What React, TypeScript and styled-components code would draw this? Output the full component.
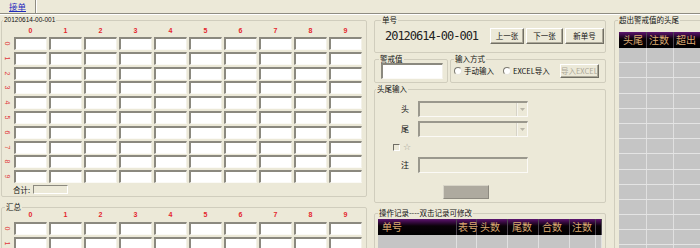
import styled, { createGlobalStyle } from "styled-components";

const CJK = `"Noto Sans CJK SC", "Liberation Sans", sans-serif`;

const GlobalStyle = createGlobalStyle`
  * { box-sizing: border-box; }
  body {
    margin: 0;
    background: #ece9d8;
    font-family: "Liberation Sans", "Noto Sans CJK SC", sans-serif;
  }
`;

const Page = styled.div`
  width: 700px;
  height: 248px;
  overflow: hidden;
  background: #ece9d8;
  display: flex;
  flex-direction: column;
`;

const TabStrip = styled.div`
  flex: none;
  height: 14px;
  display: flex;
  border-bottom: 1px solid #8f8d82;
  box-shadow: 0 1px 0 #fff;
`;

const Tab = styled.div`
  width: 36px;
  border-right: 1px solid #8f8d82;
  box-shadow: 1px 0 0 #fff;
  display: flex;
  align-items: center;
  justify-content: center;
  font: 8.5px/13px ${CJK};
  color: #1f2bbd;
  text-decoration: underline;
`;

const Main = styled.div`
  flex: 1;
  min-height: 0;
  display: flex;
  align-items: flex-start;
`;

const LeftCol = styled.div`
  flex: none;
  width: 366px;
  margin-left: 1px;
  display: flex;
  flex-direction: column;
`;

const MidCol = styled.div`
  flex: none;
  width: 232px;
  margin-left: 7px;
  display: flex;
  flex-direction: column;
`;

const RightCol = styled.div`
  flex: none;
  width: 100px;
  margin-left: 8px;
`;

const Group = styled.fieldset<{ $top?: number; $grow?: boolean }>`
  margin: ${(p) => p.$top ?? 0}px 0 0 0;
  padding: 0;
  min-width: 0;
  border: 1px solid #d0cdbd;
  border-radius: 2px;
  flex: ${(p) => (p.$grow ? 1 : "none")};
`;

const Legend = styled.legend<{ $indent: number; $latin?: boolean }>`
  margin-left: ${(p) => p.$indent}px;
  padding: 0 1px;
  height: 12px;
  font: ${(p) => (p.$latin ? `6.5px/11px "Liberation Sans", sans-serif` : `7.5px/11px ${CJK}`)};
  color: #111;
`;

/* ---------- number grids ---------- */

const HeadRow = styled.div<{ $top: number; $bottom: number }>`
  display: grid;
  grid-template-columns: 10px repeat(10, 33px);
  column-gap: 2px;
  height: 8px;
  margin: ${(p) => p.$top}px 0 ${(p) => p.$bottom}px 0;
`;

const HeadNum = styled.span`
  text-align: center;
  font: bold 7px/8px "Liberation Sans", sans-serif;
  color: #e4262c;
`;

const CellGrid = styled.div`
  display: grid;
  grid-template-columns: 10px repeat(10, 33px);
  column-gap: 2px;
  grid-auto-rows: 13px;
  row-gap: 1.8px;
`;

const RowLabel = styled.span`
  display: flex;
  align-items: center;
  justify-content: center;
  font: 7px/1 "Liberation Sans", sans-serif;
  color: #e0383c;
  transform: rotate(90deg);
`;

const Cell = styled.div`
  background: #fff;
  border-style: solid;
  border-width: 2px 1px 1px 2px;
  border-color: #8b897f #f3f1e8 #fbfaf6 #8b897f;
`;

const TotalRow = styled.div`
  display: flex;
  align-items: center;
  height: 9px;
  margin: 2px 0 2px 11px;
`;

const TotalLabel = styled.span`
  width: 20px;
  font: 7.5px/9px ${CJK};
  color: #111;
`;

const TotalBox = styled.div`
  width: 35px;
  height: 9px;
  border: 1px solid;
  border-color: #8b897f #fff #fff #8b897f;
`;

const digits = Array.from({ length: 10 }, (_, i) => i);

const NumberGrid = ({
  headTop,
  headBottom,
  rows,
}: {
  headTop: number;
  headBottom: number;
  rows: number;
}) => (
  <>
    <HeadRow $top={headTop} $bottom={headBottom}>
      <span />
      {digits.map((d) => (
        <HeadNum key={d}>{d}</HeadNum>
      ))}
    </HeadRow>
    <CellGrid>
      {digits.slice(0, rows).map((r) => [
        <RowLabel key={`l${r}`}>{r}</RowLabel>,
        ...digits.map((c) => <Cell key={`${r}-${c}`} />),
      ])}
    </CellGrid>
  </>
);

/* ---------- middle panel ---------- */

const SheetRow = styled.div`
  display: flex;
  align-items: center;
  height: 16px;
  margin: 2px 1px 8px 10px;
`;

const BigNo = styled.span`
  flex: 1;
  font: 12px/16px "DejaVu Sans Mono", monospace;
  letter-spacing: -1.02px;
  color: #222;
`;

const ButtonRow = styled.div`
  display: flex;
  gap: 2px;
`;

const Button = styled.button<{ $w: number; $h?: number; $off?: boolean }>`
  width: ${(p) => p.$w}px;
  height: ${(p) => p.$h ?? 16}px;
  padding: 0;
  background: #ece9d8;
  border: 1px solid;
  border-color: #fff #716f64 #716f64 #fff;
  box-shadow: inset -1px -1px 0 #aca899;
  font: 7.5px/1 ${CJK};
  color: ${(p) => (p.$off ? "#aca899" : "#111")};
  white-space: nowrap;
`;

const Row = styled.div`
  display: flex;
  gap: 2px;
`;

const AlertBody = styled.div`
  margin-top: -2px;
  padding: 0 0 3px 6px;
`;

const WhiteInput = styled.div<{ $w: number }>`
  width: ${(p) => p.$w}px;
  height: 16px;
  background: #fff;
  border-style: solid;
  border-width: 2px 1px 1px 2px;
  border-color: #8b897f #f3f1e8 #fbfaf6 #8b897f;
`;

const ModeBody = styled.div`
  display: flex;
  align-items: center;
  height: 16px;
  margin: -2px 0 3px 3px;
`;

const Option = styled.label<{ $gap: number }>`
  display: flex;
  align-items: center;
  gap: 2px;
  margin-right: ${(p) => p.$gap}px;
  font: 7.5px/1 ${CJK};
  color: #111;
  white-space: nowrap;
`;

const Radio = styled.span`
  width: 8px;
  height: 8px;
  border-radius: 50%;
  background: #fff;
  border: 1px solid;
  border-color: #7c7a70 #e8e6dc #e8e6dc #7c7a70;
`;

const FormGrid = styled.div`
  display: grid;
  grid-template-columns: 20px 110px;
  grid-template-rows: 16px 16px 12px 16px;
  column-gap: 3px;
  row-gap: 4px;
  margin: 6px 0 0 20px;
`;

const FieldLabel = styled.span`
  align-self: center;
  text-align: center;
  font: 8px/1 ${CJK};
  color: #111;
`;

const SunkenField = styled.div`
  display: flex;
  justify-content: flex-end;
  background: #ece9d8;
  border-style: solid;
  border-width: 2px 1px 1px 2px;
  border-color: #9a988d #fbfaf6 #fbfaf6 #9a988d;
`;

const ArrowBox = styled.span`
  width: 10px;
  display: flex;
  align-items: center;
  justify-content: center;
  border-left: 1px solid #f6f5ee;
  box-shadow: -1px 0 0 #d6d3c6;
`;

const CheckRow = styled.div`
  grid-column: 1 / span 2;
  display: flex;
  align-items: center;
  gap: 3px;
  margin-left: -2px;
`;

const CheckBox = styled.span`
  width: 7px;
  height: 7px;
  border: 1px solid;
  border-color: #6f6d64 #fff #fff #6f6d64;
`;

const Star = styled.span`
  font: 9px/1 "DejaVu Sans", sans-serif;
  color: #a19e90;
`;

const FlatButton = styled.div`
  width: 46px;
  height: 14px;
  margin: 12px 0 3px 68px;
  background: #aeaa9f;
  border: 1px solid;
  border-color: #d8d5c8 #8d8a80 #8d8a80 #d8d5c8;
`;

/* ---------- dark grids ---------- */

const HEAD_BG = "linear-gradient(to bottom, #5e1670 0px, #3a0a44 3px, #0a0208 7px, #000 100%)";

const DarkTable = styled.div<{ $cols: string; $w?: number; $ml: number; $mt: number }>`
  margin: ${(p) => p.$mt}px 0 0 ${(p) => p.$ml}px;
  width: ${(p) => (p.$w ? `${p.$w}px` : "auto")};
  & > div {
    display: grid;
    grid-template-columns: ${(p) => p.$cols};
  }
`;

const DarkHead = styled.div`
  height: 16px;
  background: ${HEAD_BG};
`;

const HeadCell = styled.span<{ $pad: number }>`
  padding-left: ${(p) => p.$pad}px;
  font: 10px/16px ${CJK};
  color: #dcaa72;
  white-space: nowrap;
  border-right: 1px solid #4d4650;
`;

const BodyRow = styled.div<{ $h: number }>`
  height: ${(p) => p.$h}px;
  background: #c5c5c5;
  border-bottom: 1px solid #e4e4e4;
`;

const BodyCell = styled.span`
  border-right: 1px solid #e0e0e0;
`;

const logCols = [
  { t: "单号", p: 4 },
  { t: "表号", p: 1 },
  { t: "头数", p: 3 },
  { t: "尾数", p: 4 },
  { t: "合数", p: 3 },
  { t: "注数", p: 2 },
  { t: "", p: 0 },
];

const overCols = [
  { t: "头尾", p: 4 },
  { t: "注数", p: 2 },
  { t: "超出", p: 2 },
];

const Arrow = () => (
  <svg width="5" height="3" viewBox="0 0 5 3">
    <path d="M0 0h5L2.5 3z" fill="#b9b6a8" />
  </svg>
);

export default function App() {
  return (
    <Page>
      <GlobalStyle />
      <TabStrip>
        <Tab>接单</Tab>
      </TabStrip>
      <Main>
        <LeftCol>
          <Group>
            <Legend $indent={1} $latin>
              20120614-00-001
            </Legend>
            <NumberGrid headTop={1} headBottom={2} rows={10} />
            <TotalRow>
              <TotalLabel>合计:</TotalLabel>
              <TotalBox />
            </TotalRow>
          </Group>
          <Group $top={4}>
            <Legend $indent={3}>汇总</Legend>
            <NumberGrid headTop={-2} headBottom={3} rows={2} />
          </Group>
        </LeftCol>

        <MidCol>
          <Group>
            <Legend $indent={6}>单号</Legend>
            <SheetRow>
              <BigNo>20120614-00-001</BigNo>
              <ButtonRow>
                <Button $w={34}>上一张</Button>
                <Button $w={37}>下一张</Button>
                <Button $w={39}>新单号</Button>
              </ButtonRow>
            </SheetRow>
          </Group>

          <Row>
            <Group style={{ width: 74 }}>
              <Legend $indent={4}>警戒值</Legend>
              <AlertBody>
                <WhiteInput $w={62} />
              </AlertBody>
            </Group>
            <Group $grow>
              <Legend $indent={3}>输入方式</Legend>
              <ModeBody>
                <Option $gap={9}>
                  <Radio />
                  手动输入
                </Option>
                <Option $gap={10}>
                  <Radio />
                  EXCEL导入
                </Option>
                <Button $w={39} $h={14} $off>
                  导入EXCEL
                </Button>
              </ModeBody>
            </Group>
          </Row>

          <Group>
            <Legend $indent={1}>头尾输入</Legend>
            <FormGrid>
              <FieldLabel>头</FieldLabel>
              <SunkenField>
                <ArrowBox>
                  <Arrow />
                </ArrowBox>
              </SunkenField>
              <FieldLabel>尾</FieldLabel>
              <SunkenField>
                <ArrowBox>
                  <Arrow />
                </ArrowBox>
              </SunkenField>
              <CheckRow>
                <CheckBox />
                <Star>☆</Star>
              </CheckRow>
              <FieldLabel>注</FieldLabel>
              <SunkenField />
            </FormGrid>
            <FlatButton />
          </Group>

          <Group $top={4}>
            <Legend $indent={3}>操作记录----双击记录可修改</Legend>
            <DarkTable $cols="79px 20px 31px 31px 31px 26px 1fr" $w={224} $ml={3} $mt={0}>
              <DarkHead>
                {logCols.map((c, i) => (
                  <HeadCell key={i} $pad={c.p}>
                    {c.t}
                  </HeadCell>
                ))}
              </DarkHead>
              <BodyRow $h={40}>
                {logCols.map((_, i) => (
                  <BodyCell key={i} />
                ))}
              </BodyRow>
            </DarkTable>
          </Group>
        </MidCol>

        <RightCol>
          <Group>
            <Legend $indent={3}>超出警戒值的头尾</Legend>
            <DarkTable $cols="28px 27px 1fr" $ml={4} $mt={6}>
              <DarkHead>
                {overCols.map((c, i) => (
                  <HeadCell key={i} $pad={c.p}>
                    {c.t}
                  </HeadCell>
                ))}
              </DarkHead>
              {Array.from({ length: 14 }, (_, r) => (
                <BodyRow key={r} $h={15.2}>
                  {overCols.map((_, i) => (
                    <BodyCell key={i} />
                  ))}
                </BodyRow>
              ))}
            </DarkTable>
          </Group>
        </RightCol>
      </Main>
    </Page>
  );
}
